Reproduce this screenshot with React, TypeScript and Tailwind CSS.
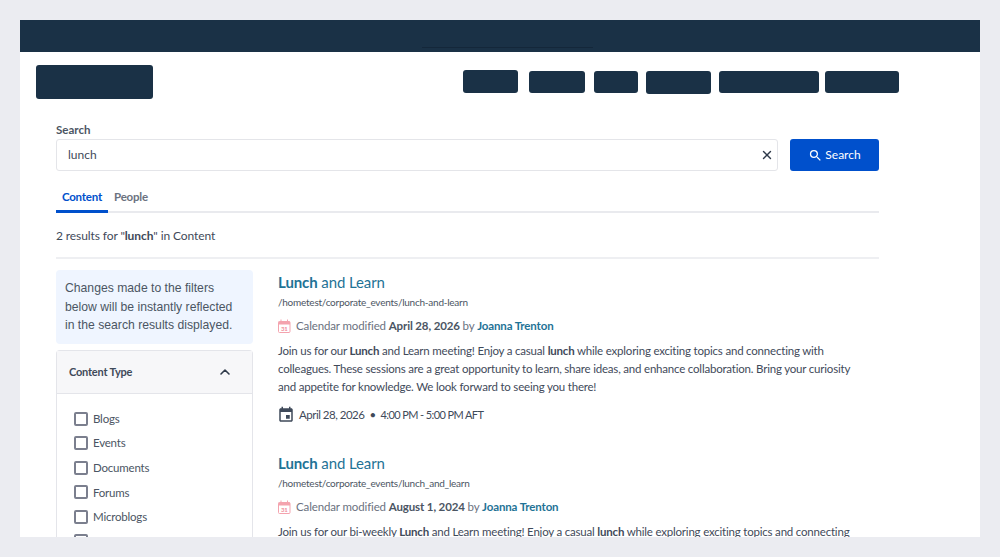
import { X, ChevronUp } from "lucide-react";

const navItems = [
  "w-[55px] h-[23px] mt-[-1px] mr-[11px]",
  "w-[56px] h-[22px] mr-[9px]",
  "w-[44px] h-[22px] mr-[8px]",
  "w-[65px] h-[23px] mr-[8px]",
  "w-[100px] h-[22px] mr-[6px]",
  "w-[74px] h-[22px]",
];

const contentTypes = ["Blogs", "Events", "Documents", "Forums", "Microblogs", "Pages"];

function CalendarBadge() {
  return (
    <svg width="13" height="14" viewBox="0 0 13 14" fill="none" className="shrink-0">
      <rect x="0.5" y="2.5" width="11.5" height="11" rx="1" fill="#fff" stroke="#f4a3ae" />
      <rect x="0.5" y="2.5" width="11.5" height="3" fill="#f4a3ae" />
      <path d="M3 0.5v2.5M9.5 0.5v2.5" stroke="#f4a3ae" />
      <text x="6.3" y="11.8" fontSize="6" fontWeight="700" textAnchor="middle" fill="#f08a98">31</text>
    </svg>
  );
}

function EventIcon() {
  return (
    <svg width="18" height="18" viewBox="0 0 24 24" fill="#3f4a5a" className="-ml-[1px] shrink-0">
      <path d="M17 12h-5v5h5v-5zM16 1v2H8V1H6v2H5c-1.11 0-1.99.9-1.99 2L3 19c0 1.1.89 2 2 2h14c1.1 0 2-.9 2-2V5c0-1.1-.9-2-2-2h-1V1h-2zm3 18H5V8h14v11z" />
    </svg>
  );
}

function SearchIcon() {
  return (
    <svg width="15" height="15" viewBox="0 0 24 24" fill="currentColor" className="shrink-0">
      <path d="M15.5 14h-.79l-.28-.27A6.47 6.47 0 0 0 16 9.5 6.5 6.5 0 1 0 9.5 16c1.61 0 3.09-.59 4.23-1.57l.27.28v.79l5 4.99L20.49 19l-4.99-5zm-6 0C7.01 14 5 11.99 5 9.5S7.01 5 9.5 5 14 7.01 14 9.5 11.99 14 9.5 14z" />
    </svg>
  );
}

function ResultItem({ path, date, intro, event }: { path: string; date: string; intro: React.ReactNode; event?: boolean }) {
  return (
    <div>
      <h3 className="text-[15px] leading-[20px] tracking-[-0.1px] text-[#1f7396]">
        <b className="font-bold">Lunch</b> and Learn
      </h3>
      <p className="mt-[2px] text-[10px] leading-[16px] tracking-[-0.24px] text-[#4b5563]">{path}</p>
      <div className="mt-[7px] flex h-[18px] items-center text-[11.5px] tracking-[-0.13px] text-[#6b7280]">
        <CalendarBadge />
        <span className="ml-[5px]">
          Calendar modified <b className="font-bold text-[#4b5563]">{date}</b> by{" "}
          <b className="font-bold text-[#1f7396]">Joanna Trenton</b>
        </span>
      </div>
      <div className="mt-[7px] w-[575px] text-[11.5px] leading-[18px] tracking-[-0.2px] text-[#3f4a5a]">{intro}</div>
      {event && (
        <div className="mt-[10px] flex h-[18px] items-center text-[11.5px] tracking-[-0.5px] text-[#3f4a5a]">
          <EventIcon />
          <span className="ml-[4px]">April 28, 2026</span>
          <span className="mx-[5px]">•</span>
          <span className="text-[11px] tracking-[-0.6px]">4:00 PM - 5:00 PM AFT</span>
        </div>
      )}
    </div>
  );
}

export default function App() {
  return (
    <div className="h-[557px] overflow-hidden bg-[#ebecf1] p-5 font-['Lato','Noto_Sans',sans-serif]">
      <div className="h-[517px] overflow-hidden bg-white">
        <div className="relative h-8 bg-[#1a3146]">
          <div className="absolute left-[402px] top-[27px] h-px w-[171px] bg-[#14273a]" />
        </div>

        <div className="flex pl-4 pr-[81px] pt-[13px]">
          <div className="h-[34px] w-[117px] rounded-[3px] bg-[#1a3146]" />
          <div className="ml-auto mt-[6px] flex items-start">
            {navItems.map((cls) => (
              <div key={cls} className={`${cls} rounded-[3px] bg-[#1a3146]`} />
            ))}
          </div>
        </div>

        <div className="w-[859px] pl-9 pt-[23px]">
          <label className="block text-[11.5px] font-bold leading-[16px] text-[#4b5563]">Search</label>
          <div className="mt-[1px] flex gap-3">
            <div className="flex h-8 flex-1 items-center rounded-[3px] border border-[#e4e5e9] pl-[11px] pr-[3px] text-[12px] text-[#3f4a5a]">
              <span>lunch</span>
              <X size={14} strokeWidth={2.4} className="ml-auto text-[#2f3a4a]" />
            </div>
            <button className="flex h-8 w-[89px] items-center justify-center gap-[2px] rounded-[3px] bg-[#0050cc] text-[12px] text-white">
              <SearchIcon />
              Search
            </button>
          </div>

          <div className="mt-[12px] flex h-[30px] border-b-2 border-[#e9eaee] text-[11.5px] font-bold tracking-[-0.2px]">
            <div className="-mb-[2px] flex w-[52px] items-center justify-center border-b-[3px] border-[#0050cc] text-[#0050cc]">
              Content
            </div>
            <div className="flex items-center pl-[6px] text-[#6b7280]">People</div>
          </div>

          <p className="mt-[14px] text-[12px] leading-[18px] tracking-[-0.1px] text-[#3f4a5a]">
            2 results for "<b className="font-bold">lunch</b>" in Content
          </p>
          <div className="mt-[12px] h-[2px] bg-[#eeeff2]" />

          <div className="mt-[11px] flex gap-[25px]">
            <aside className="w-[197px] shrink-0">
              <div className="rounded-[4px] bg-[#eff5ff] py-[9px] pl-[9px] pr-[17px] font-['Liberation_Sans',sans-serif] text-[12.2px] leading-[18.5px] text-[#4b5563]">
                Changes made to the filters below will be instantly reflected in the search results displayed.
              </div>
              <div className="mt-[6px] rounded-[4px] border border-b-0 border-[#e4e5ea]">
                <div className="flex h-[43px] items-center justify-between border-b border-[#e4e5ea] bg-[#f7f7f9] pl-[12px] pr-[19px]">
                  <span className="pt-[2px] text-[11px] font-bold tracking-[-0.2px] text-[#3f4a5a]">Content Type</span>
                  <ChevronUp size={16} strokeWidth={2.4} className="text-[#2f3a4a]" />
                </div>
                <ul className="flex flex-col gap-[10.6px] pl-[17px] pt-[18px]">
                  {contentTypes.map((t) => (
                    <li key={t} className="flex h-[14px] items-center gap-[5px] text-[11.5px] tracking-[-0.2px] text-[#4b5563]">
                      <span className="h-[14px] w-[14px] rounded-[2px] border-2 border-[#7b7f8e]" />
                      {t}
                    </li>
                  ))}
                </ul>
              </div>
            </aside>

            <main className="flex-1 pt-[2px]">
              <ResultItem
                path="/hometest/corporate_events/lunch-and-learn"
                date="April 28, 2026"
                event
                intro={
                  <>
                    Join us for our <b className="font-bold">Lunch</b> and Learn meeting! Enjoy a casual{" "}
                    <b className="font-bold">lunch</b> while exploring exciting topics and connecting with colleagues.
                    These sessions are a great opportunity to learn, share ideas, and enhance collaboration. Bring your
                    curiosity and appetite for knowledge. We look forward to seeing you there!
                  </>
                }
              />
              <div className="mt-[29px]">
                <ResultItem
                  path="/hometest/corporate_events/lunch_and_learn"
                  date="August 1, 2024"
                  intro={
                    <>
                      Join us for our bi-weekly <b className="font-bold">Lunch</b> and Learn meeting! Enjoy a casual{" "}
                      <b className="font-bold">lunch</b> while exploring exciting topics and connecting
                    </>
                  }
                />
              </div>
            </main>
          </div>
        </div>
      </div>
    </div>
  );
}
